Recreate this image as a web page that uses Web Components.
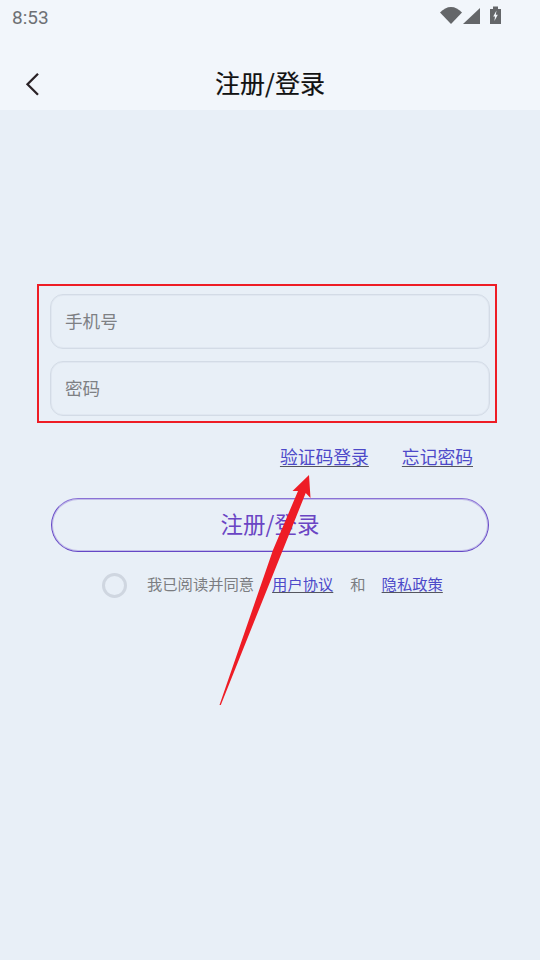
<!DOCTYPE html>
<html lang="zh-CN"><head><meta charset="utf-8"><title>注册/登录</title>
<style>
html,body{margin:0;padding:0;background:#e8eff7;}
body{font-family:"Noto Sans CJK SC","Noto Sans",sans-serif;width:540px;height:960px;overflow:hidden;}
</style></head><body>
<login-page></login-page>
<script>
function def(name, html){
  customElements.define(name, class extends HTMLElement{
    constructor(){super();this.attachShadow({mode:'open'}).innerHTML=html;}
  });
}
def('status-bar',`<style>
:host{display:flex;align-items:flex-start;justify-content:space-between;height:34px;padding:0 36px 0 12px;font:19px/36px Roboto,sans-serif;color:#6e7074;}
svg{display:block}
</style><span>8:53</span>
<svg width="64" height="34" viewBox="440 0 64 34" fill="#646669">
<path d="M440 12.500C443.500 9 447 7 451 7S458.500 9 462 12.500L451 24Z"/>
<path d="M463 24 480 8V24Z"/>
<path d="M490 9H493V6.500H498V9H501V24H490Z"/>
<path d="M496.500 10.500 493.200 16.500H495L494.400 21 497.800 14.800H495.800Z" fill="#f2f6fb"/>
</svg>`);
def('nav-bar',`<style>
:host{display:flex;align-items:center;justify-content:center;position:relative;height:76px;}
h1{margin:0;font:400 25px/1 "Noto Sans CJK SC",sans-serif;color:#111;position:relative;top:10px;-webkit-text-stroke:.2px #111;}
button{position:absolute;left:20px;top:34px;width:24px;height:32px;padding:0;border:0;background:none;}
svg{display:block}
</style><button aria-label="返回"><svg width="24" height="32" viewBox="0 0 24 32" fill="none" stroke="#2a2226" stroke-width="2.300"><path d="M18 5.700 7.500 16.200 18 26.700"/></svg></button><h1><slot></slot></h1>`);
def('text-field',`<style>
:host{display:flex;align-items:center;box-sizing:border-box;height:55px;padding:0 14px 2px;border:1px solid #d3dbe6;box-shadow:inset 0 0 0 1px rgba(214,222,233,.45);border-radius:13px;font-size:17.600px;color:#7e8084;}
</style><slot></slot>`);
def('text-link',`<style>
:host{display:inline-block;color:#4d49c9;text-decoration:underline;text-decoration-color:#55565e;text-underline-offset:2px;}
</style><slot></slot>`);
def('main-button',`<style>
:host{display:flex;align-items:center;justify-content:center;box-sizing:border-box;height:54px;padding-bottom:4px;border:1px solid #6547c6;border-top-color:#8a72d6;box-shadow:inset 0 0 0 1px rgba(106,75,198,.3);border-radius:27px;font-size:22.500px;color:#6a45c4;}
</style><slot></slot>`);
def('radio-dot',`<style>
:host{display:block;box-sizing:border-box;width:25px;height:25px;border:3px solid #cfd6e0;border-radius:50%;}
</style>`);
def('login-page',`<style>
:host{display:block;position:relative;width:540px;height:960px;background:#e8eff7;}
header{background:#f2f6fb;height:110px;}
main{padding:184px 50px 0;}
.fields{display:flex;flex-direction:column;gap:12px;}
.links{display:flex;justify-content:flex-end;gap:33px;padding:28px 17px 0 0;font-size:17.800px;line-height:24px;}
main-button{margin:30px 1px 0;}
.agree{display:flex;align-items:center;margin-top:19px;padding-left:52px;font-size:15.300px;line-height:24px;color:#7b7d81;}
.agree > :not(radio-dot){margin-bottom:4px;}
radio-dot{margin-right:20px;}
.agree > .gap1{margin-left:18px}.agree > .gap2{margin:0 16px 4px 17px}
.mark{position:absolute;left:37px;top:284px;box-sizing:border-box;width:460px;height:139px;border:2px solid #ee1c25;}
svg.arrow{position:absolute;left:0;top:0;pointer-events:none;}
</style>
<header><status-bar></status-bar><nav-bar>注册/登录</nav-bar></header>
<main>
<div class="fields"><text-field>手机号</text-field><text-field>密码</text-field></div>
<div class="links"><text-link>验证码登录</text-link><text-link>忘记密码</text-link></div>
<main-button>注册/登录</main-button>
<div class="agree"><radio-dot></radio-dot><span>我已阅读并同意</span><text-link class="gap1">用户协议</text-link><span class="gap2">和</span><text-link>隐私政策</text-link></div>
</main>
<div class="mark"></div>
<svg class="arrow" width="540" height="960"><path d="M219.500 705 273 550 298 491 292.500 491 309 475 310.500 498 305.700 493 220.800 705Z" fill="#ee1c25"/></svg>`);
</script>
</body></html>
